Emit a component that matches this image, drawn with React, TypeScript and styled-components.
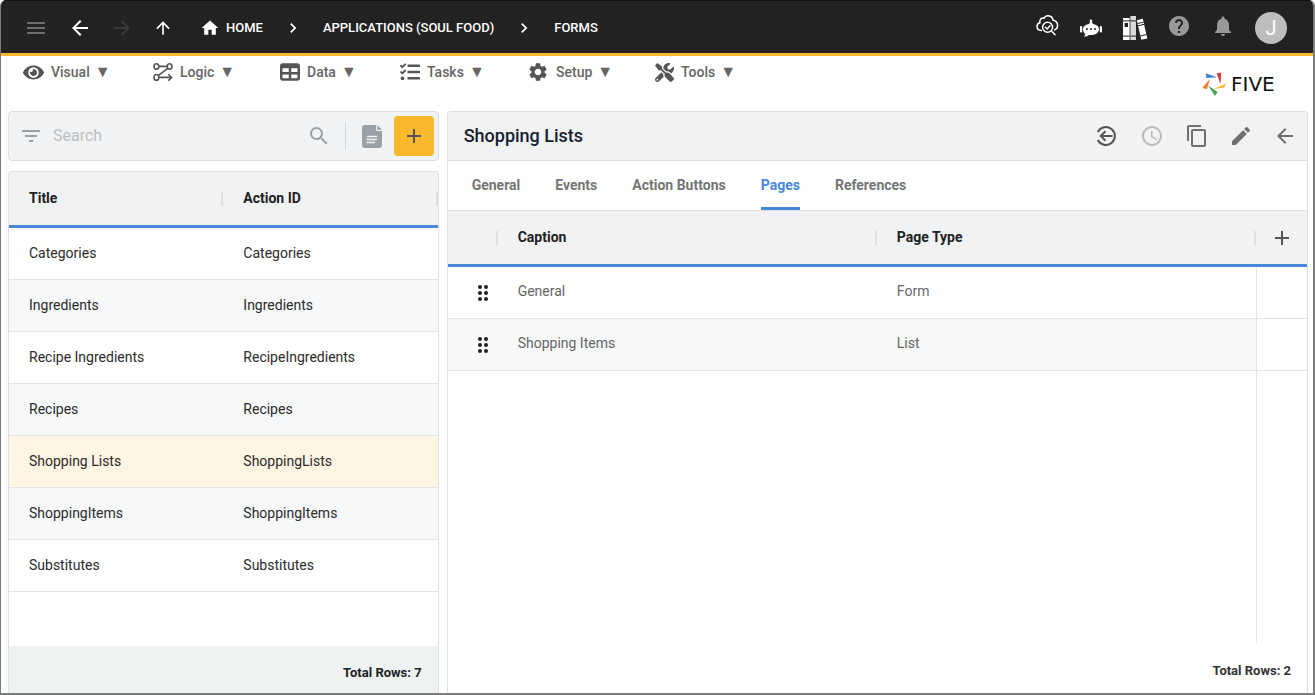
import React from "react";
import styled, { createGlobalStyle } from "styled-components";
import {
  MdMenu,
  MdArrowBack,
  MdArrowForward,
  MdArrowUpward,
  MdHome,
  MdNavigateNext,
  MdHelp,
  MdNotifications,
  MdAccessTime,
  MdContentCopy,
  MdEdit,
  MdAdd,
  MdSearch,
  MdFilterList,
  MdSettings,
} from "react-icons/md";
import { FaEye, FaTasks, FaTools } from "react-icons/fa";
import { FaTable } from "react-icons/fa6";

const c = {
  bar: "#222222",
  yellow: "#f7b82b",
  blue: "#4688db",
  panel: "#f1f2f4",
  line: "#dddfe0",
  rowLine: "#e2e4e5",
  alt: "#f7f8fa",
  selected: "#fff5e2",
  icon: "#555555",
};

const GlobalStyle = createGlobalStyle`
  *, *::before, *::after { box-sizing: border-box; }
  body { margin: 0; background: #ffffff; font-family: Roboto, sans-serif; font-size: 14px; }
  button, input { font: inherit; }
  svg { display: block; flex: none; }
`;

const Frame = styled.div`
  display: flex;
  flex-direction: column;
  min-height: 100vh;
  border: solid #7c7c7c;
  border-width: 0 2px 2px 1px;
  border-radius: 6px 6px 0 0;
  overflow: hidden;
`;

const TopBar = styled.header`
  display: flex;
  align-items: center;
  justify-content: space-between;
  height: 56px;
  padding: 2px 26px 0 15px;
  background: ${c.bar};
  border-top: 1px solid #111111;
  border-bottom: 3px solid ${c.yellow};
`;

const Group = styled.div`
  display: flex;
  align-items: center;
`;

const IconButton = styled.button<{ $w?: number; $color?: string; $raised?: boolean }>`
  display: flex;
  align-items: center;
  justify-content: center;
  width: ${(p) => p.$w ?? 44}px;
  height: 40px;
  padding: 0 0 ${(p) => (p.$raised ? 4 : 0)}px;
  border: 0;
  background: none;
  color: ${(p) => p.$color ?? "#ffffff"};
  cursor: pointer;
`;

const Crumbs = styled.nav`
  display: flex;
  align-items: center;
  gap: 20px;
  margin-left: 14px;
  color: #ffffff;
`;

const Crumb = styled.a`
  display: flex;
  align-items: center;
  gap: 6px;
  color: #ffffff;
  font-size: 13px;
  font-weight: 500;
  line-height: 20px;
  text-decoration: none;
`;

const Avatar = styled.button`
  width: 32px;
  height: 32px;
  margin-left: 10px;
  padding: 0;
  border: 0;
  border-radius: 50%;
  background: #bdbdbd;
  color: #ffffff;
  font-size: 20px;
`;

const MenuBar = styled.div`
  display: flex;
  justify-content: space-between;
  height: 55px;
  padding: 3px 22px 0;
`;

const Menus = styled.nav`
  display: flex;
  align-items: flex-start;
`;

const MenuButton = styled.button<{ $w: number }>`
  display: flex;
  align-items: center;
  gap: 7px;
  width: ${(p) => p.$w}px;
  height: 26px;
  padding: 0;
  border: 0;
  background: none;
  color: #666666;
  font-weight: 500;
  white-space: nowrap;
  cursor: pointer;

  svg {
    color: ${c.icon};
  }
`;

const Caret = styled.span`
  margin-left: 5px;
  font-size: 16px;
  line-height: 16px;
`;

const Brand = styled.div`
  display: flex;
  align-items: center;
  gap: 5px;
  height: 50px;
  color: #111111;
  font-family: "DejaVu Sans", sans-serif;
  font-size: 20px;
`;

const BrandName = styled.span`
  width: 60px;
`;

const Main = styled.main`
  flex: 1;
  display: grid;
  grid-template-columns: minmax(0, 1fr) minmax(0, 2fr);
  gap: 8px;
  padding: 0 5px 0 7px;
`;

const Side = styled.section`
  display: flex;
  flex-direction: column;
  gap: 10px;
`;

const SearchBar = styled.div`
  display: flex;
  align-items: center;
  height: 50px;
  padding: 0 4px 0 0;
  border: 1px solid ${c.line};
  border-radius: 4px;
  background: ${c.panel};
`;

const SearchInput = styled.input`
  flex: 1;
  min-width: 0;
  padding: 0 0 2px;
  border: 0;
  outline: 0;
  background: none;
  color: #333333;
  font-size: 16px;

  &::placeholder {
    color: #bcbfc1;
    opacity: 1;
  }
`;

const Divider = styled.span`
  width: 1px;
  height: 28px;
  margin: 0 4px;
  background: #d3d6d8;
`;

const AddButton = styled(IconButton)`
  border-radius: 4px;
  background: ${c.yellow};
`;

const Panel = styled.section`
  flex: 1;
  display: flex;
  flex-direction: column;
  min-width: 0;
  border: 1px solid ${c.line};
  border-bottom: 0;
  border-radius: 4px 4px 0 0;
  overflow: hidden;
`;

const Table = styled.table`
  width: 100%;
  table-layout: fixed;
  border-collapse: separate;
  border-spacing: 0;
`;

const Th = styled.th<{ $sep?: boolean }>`
  height: 56px;
  padding: 0 20px 2px;
  border-bottom: 3px solid ${c.blue};
  background: ${c.panel};
  ${(p) =>
    p.$sep
      ? `background: linear-gradient(${c.line}, ${c.line}) right center / 2px 14px no-repeat, ${c.panel};`
      : ""}
  color: #212121;
  font-weight: 700;
  text-align: left;
`;

const Row = styled.tr<{ $selected?: boolean }>`
  &:nth-child(even) {
    background: ${c.alt};
  }
  && {
    ${(p) => (p.$selected ? `background: ${c.selected};` : "")}
  }
`;

const Td = styled.td<{ $muted?: boolean }>`
  height: 52px;
  padding: 0 20px ${(p) => (p.$muted ? 4 : 2)}px;
  border-bottom: 1px solid ${c.rowLine};
  color: ${(p) => (p.$muted ? "#666666" : "#2b2b2b")};
`;

const GripCell = styled(Td)`
  padding: 0 0 0 29px;
  color: #212121;
`;

const EndCell = styled(Td)`
  border-left: 1px solid ${c.rowLine};
  background: #ffffff;
`;

const ActionHead = styled(Th)`
  padding: 0;
`;

const Filler = styled.div`
  flex: 1;
`;

const SplitFiller = styled.div`
  flex: 1;
  margin-right: 50px;
  border-right: 1px solid ${c.rowLine};
`;

const Total = styled.footer<{ $tinted?: boolean }>`
  height: ${(p) => (p.$tinted ? 47 : 50)}px;
  padding: ${(p) => (p.$tinted ? 5 : 6)}px 16px 0;
  background: ${(p) => (p.$tinted ? "#eef2f3" : "#ffffff")};
  color: ${(p) => (p.$tinted ? "#212121" : "#333333")};
  font-size: 13px;
  font-weight: 700;
  line-height: 44px;
  text-align: right;
`;

const PanelHeader = styled.div`
  display: flex;
  align-items: center;
  justify-content: space-between;
  height: 49px;
  padding-left: 16px;
  border-bottom: 1px solid ${c.line};
  background: ${c.panel};
`;

const Heading = styled.h1`
  margin: 0;
  padding-bottom: 2px;
  color: #16202e;
  font-size: 18px;
  font-weight: 500;
`;

const Tabs = styled.div`
  display: flex;
  gap: 35px;
  height: 50px;
  padding: 0 24px;
  border-bottom: 1px solid ${c.line};
`;

const Tab = styled.button<{ $active: boolean }>`
  padding: 2px 0 0;
  border: 0;
  border-bottom: 3px solid ${(p) => (p.$active ? c.blue : "transparent")};
  background: none;
  color: ${(p) => (p.$active ? c.blue : "#757575")};
  font-weight: 700;
  cursor: pointer;
`;

const LogicIcon = () => (
  <svg width="20" height="20" viewBox="0 0 20 20" fill="none" stroke="currentColor" strokeWidth="1.6">
    <ellipse cx="3.4" cy="4.400" rx="2.400" ry="2.700" />
    <ellipse cx="16.600" cy="4.400" rx="2.400" ry="2.700" />
    <ellipse cx="3.400" cy="15.400" rx="2.400" ry="2.900" />
    <path d="M6 4.400h8M14.800 6.300 5.400 13.400M6 15.400h12.400M15.400 12.200l3.200 3.200-3.200 3.200" />
  </svg>
);

const CloudCheckIcon = () => (
  <svg width="24" height="24" viewBox="0 0 24 24" fill="none" stroke="currentColor" strokeWidth="1.5" strokeLinecap="round">
    <path d="M6.300 16.600C3.600 16.400 2 14.800 2 12.600c0-2 1.100-3.500 2.900-3.900C4.200 5.500 6.500 3.500 9 4.200 10 2.200 11.600 1.500 13.300 1.700c2.700.3 4.500 2.200 4.800 4.600 2.900.6 4.500 2.600 4.500 5.200 0 2.200-1.100 3.800-2.900 4.400" />
    <circle cx="12.600" cy="13.200" r="5" />
    <path d="m10.400 13.200 1.700 1.700 2.900-3.200M16.400 17l3.600 3.600" />
  </svg>
);

const BotIcon = () => (
  <svg width="22" height="18" viewBox="0 0 22 18" fill="currentColor">
    <path d="M11 .6a1.200 1.200 0 0 1 .8 2.200L13 5c3.800.6 6 2.600 6 5.200 0 3.400-3 5.700-7.200 5.700H8.600C7.600 17 5.800 17.700 3.800 17.400c1-.6 1.400-1.400 1.400-2.400C3.800 13.900 3 12.200 3 10.200 3 7.600 5.200 5.600 9 5l1.200-2.200A1.200 1.200 0 0 1 11 .6Z" />
    <rect x="0" y="7" width="2.200" height="6.400" rx="1" />
    <rect x="19.800" y="7" width="2.200" height="6.400" rx="1" />
    <g fill={c.bar}>
      <circle cx="7" cy="10" r="1" />
      <circle cx="11" cy="10" r="1" />
      <circle cx="15" cy="10" r="1" />
    </g>
  </svg>
);

const BooksIcon = () => (
  <svg width="26" height="26" viewBox="0 0 26 26" fill="currentColor">
    <rect x="1" y="3" width="6.600" height="22" />
    <rect x="8.400" y="1" width="5.600" height="24" fill="#d9d9d9" />
    <path d="m14.800 5.200 6-1.400 4.500 19.600-6 1.400z" />
    <g fill={c.bar}>
      <rect x="1" y="5.400" width="6.600" height="1" />
      <rect x="2.600" y="8" width="3.400" height="4" />
      <rect x="1" y="20.600" width="6.600" height="1" />
      <rect x="8.400" y="5.400" width="5.600" height="1" />
      <rect x="8.400" y="20.600" width="5.600" height="1" />
    </g>
    <path d="m15.400 8.600 6-1.400m-5.400 3.600 6-1.400m-3.800 11.600 6-1.400" stroke={c.bar} strokeWidth="1" />
  </svg>
);

const ReturnIcon = () => (
  <svg width="20" height="20" viewBox="0 0 20 20" fill="none" stroke="currentColor" strokeWidth="2">
    <path d="M1.800 6A9 9 0 1 1 1.800 14" />
    <path d="M16.500 10H5M9.500 5.200 4.700 10l4.800 4.800" />
  </svg>
);

const DocIcon = () => (
  <svg width="20" height="24" viewBox="0 0 20 24">
    <path d="M3 1h11v4.500A1.500 1.500 0 0 0 15.500 7H20v14a3 3 0 0 1-3 3H3a3 3 0 0 1-3-3V4a3 3 0 0 1 3-3Z" fill="#9aa1a6" />
    <path d="M15.200 1 20 5.800h-4.800z" fill="#9aa1a6" />
    <path d="M5 12.500h10M4.500 15.500h10.500M4.500 18.500h8.500" stroke="#f1f2f4" strokeWidth="1.300" />
  </svg>
);

const GripIcon = () => (
  <svg width="12" height="16" viewBox="0 0 12 16" fill="currentColor">
    {[2, 8, 14].map((y) => (
      <React.Fragment key={y}>
        <circle cx="3" cy={y} r="2" />
        <circle cx="9" cy={y} r="2" />
      </React.Fragment>
    ))}
  </svg>
);

const BrandMark = () => (
  <svg width="24" height="24" viewBox="0 0 24 24">
    <path d="M3.800 1.200 15 5.200 4.400 5.900z" fill="#3f83d8" />
    <path d="M14.600 1.600 19.200.6 18.600 12z" fill="#dc3a3c" />
    <path d="M24 11.400 22.200 15.600 11.800 17z" fill="#f7b82b" />
    <path d="M6 13.400 15.600 20 13 24z" fill="#43a557" />
    <path d="M8 6.800 5 17.200.3 16z" fill="#f08030" />
  </svg>
);

const menus = [
  { label: "Visual", width: 130, icon: <FaEye size={21} /> },
  { label: "Logic", width: 127, icon: <LogicIcon /> },
  { label: "Data", width: 120, icon: <FaTable size={20} /> },
  { label: "Tasks", width: 127, icon: <FaTasks size={20} /> },
  { label: "Setup", width: 128, icon: <MdSettings size={22} /> },
  { label: "Tools", width: 100, icon: <FaTools size={19} /> },
];

const forms = [
  ["Categories", "Categories"],
  ["Ingredients", "Ingredients"],
  ["Recipe Ingredients", "RecipeIngredients"],
  ["Recipes", "Recipes"],
  ["Shopping Lists", "ShoppingLists"],
  ["ShoppingItems", "ShoppingItems"],
  ["Substitutes", "Substitutes"],
];

const pages = [
  ["General", "Form"],
  ["Shopping Items", "List"],
];

const tabs = ["General", "Events", "Action Buttons", "Pages", "References"];

export default function App() {
  return (
    <>
      <GlobalStyle />
      <Frame>
        <TopBar>
          <Group>
            <IconButton $w={40} $color="#6e6e6e" aria-label="Menu"><MdMenu size={24} /></IconButton>
            <IconButton $w={48} aria-label="Back"><MdArrowBack size={24} /></IconButton>
            <IconButton $w={36} $color="#383838" aria-label="Forward"><MdArrowForward size={24} /></IconButton>
            <IconButton $w={46} aria-label="Up"><MdArrowUpward size={20} /></IconButton>
            <Crumbs aria-label="Breadcrumb">
              <Crumb href="#home"><MdHome size={20} />HOME</Crumb>
              <MdNavigateNext size={20} />
              <Crumb href="#applications">APPLICATIONS (SOUL FOOD)</Crumb>
              <MdNavigateNext size={20} />
              <Crumb href="#forms">FORMS</Crumb>
            </Crumbs>
          </Group>
          <Group>
            <IconButton $raised aria-label="Inspect deployment"><CloudCheckIcon /></IconButton>
            <IconButton aria-label="Assistant"><BotIcon /></IconButton>
            <IconButton aria-label="Documentation"><BooksIcon /></IconButton>
            <IconButton $raised $color="#999999" aria-label="Help"><MdHelp size={24} /></IconButton>
            <IconButton $raised $color="#999999" aria-label="Notifications"><MdNotifications size={24} /></IconButton>
            <Avatar aria-label="Account">J</Avatar>
          </Group>
        </TopBar>

        <MenuBar>
          <Menus>
            {menus.map((m) => (
              <MenuButton key={m.label} $w={m.width}>
                {m.icon}
                <span>{m.label}<Caret>▼</Caret></span>
              </MenuButton>
            ))}
          </Menus>
          <Brand>
            <BrandMark />
            <BrandName>FIVE</BrandName>
          </Brand>
        </MenuBar>

        <Main>
          <Side>
            <SearchBar>
              <IconButton $color="#9aa1a6" aria-label="Filter"><MdFilterList size={24} /></IconButton>
              <SearchInput type="text" placeholder="Search" aria-label="Search" />
              <IconButton $color="#9aa1a6" aria-label="Run search"><MdSearch size={24} /></IconButton>
              <Divider />
              <IconButton aria-label="Report"><DocIcon /></IconButton>
              <AddButton $w={40} $color={c.icon} aria-label="Add form"><MdAdd size={24} /></AddButton>
            </SearchBar>
            <Panel>
              <Table>
                <thead>
                  <tr>
                    <Th $sep>Title</Th>
                    <Th $sep>Action ID</Th>
                  </tr>
                </thead>
                <tbody>
                  {forms.map(([title, id]) => (
                    <Row key={id} $selected={id === "ShoppingLists"}>
                      <Td>{title}</Td>
                      <Td>{id}</Td>
                    </Row>
                  ))}
                </tbody>
              </Table>
              <Filler />
              <Total $tinted>Total Rows: 7</Total>
            </Panel>
          </Side>

          <Panel>
            <PanelHeader>
              <Heading>Shopping Lists</Heading>
              <Group>
                <IconButton $w={46} $color={c.icon} aria-label="Revert"><ReturnIcon /></IconButton>
                <IconButton $w={46} $color="#b9bbbc" aria-label="History"><MdAccessTime size={24} /></IconButton>
                <IconButton $w={44} $color="#707070" aria-label="Copy"><MdContentCopy size={24} /></IconButton>
                <IconButton $w={44} $color="#707070" aria-label="Edit"><MdEdit size={24} /></IconButton>
                <IconButton $w={44} $color="#707070" aria-label="Close"><MdArrowBack size={24} /></IconButton>
              </Group>
            </PanelHeader>
            <Tabs role="tablist">
              {tabs.map((t) => (
                <Tab key={t} role="tab" aria-selected={t === "Pages"} $active={t === "Pages"}>{t}</Tab>
              ))}
            </Tabs>
            <Table>
              <colgroup>
                <col width="50" />
                <col />
                <col />
                <col width="51" />
              </colgroup>
              <thead>
                <tr>
                  <Th $sep aria-label="Order" />
                  <Th $sep>Caption</Th>
                  <Th $sep>Page Type</Th>
                  <ActionHead>
                    <IconButton $w={51} $color={c.icon} aria-label="Add page"><MdAdd size={24} /></IconButton>
                  </ActionHead>
                </tr>
              </thead>
              <tbody>
                {pages.map(([caption, type]) => (
                  <Row key={caption}>
                    <GripCell><GripIcon /></GripCell>
                    <Td $muted>{caption}</Td>
                    <Td $muted>{type}</Td>
                    <EndCell />
                  </Row>
                ))}
              </tbody>
            </Table>
            <SplitFiller />
            <Total>Total Rows: 2</Total>
          </Panel>
        </Main>
      </Frame>
    </>
  );
}
